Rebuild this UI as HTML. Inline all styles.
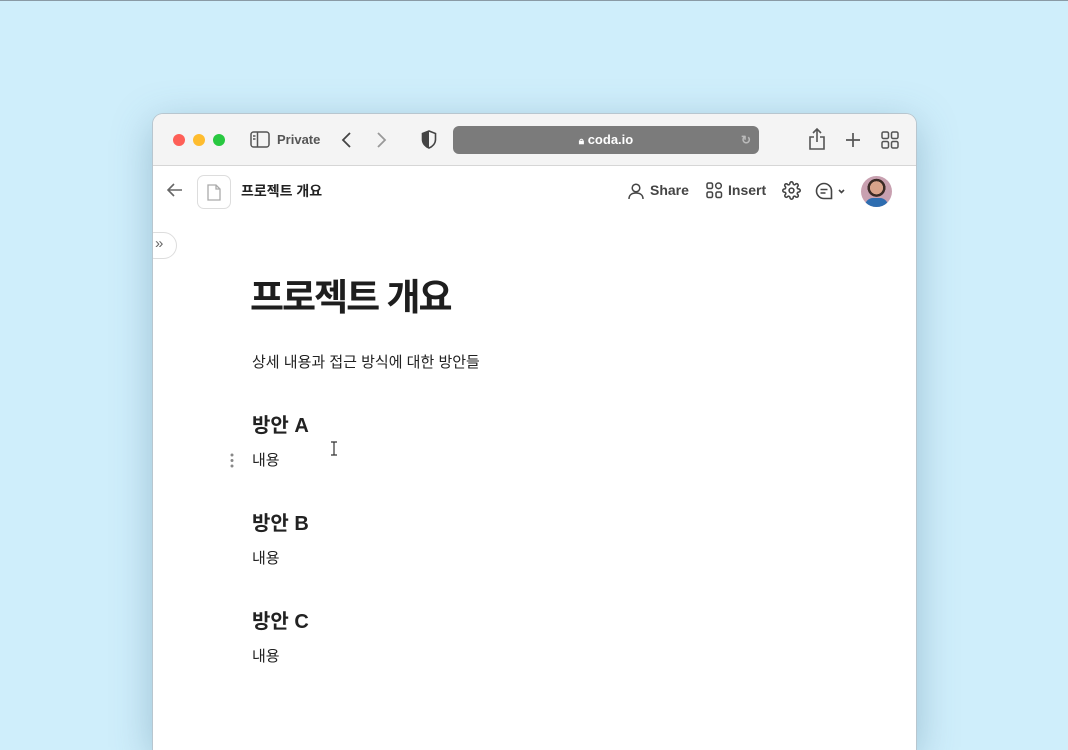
<!DOCTYPE html>
<html><head><meta charset="utf-8"><style>
*{margin:0;padding:0;box-sizing:border-box}
html,body{width:1068px;height:750px;overflow:hidden}
body{background:#cfeefb;position:relative;font-family:"Liberation Sans","Noto Sans CJK KR",sans-serif}
.topline{position:absolute;left:0;top:0;width:1068px;height:1px;background:#8a9aa5}
.win{position:absolute;left:152px;top:113px;width:765px;height:637px;background:#fff;border-radius:11px 11px 0 0;box-shadow:0 10px 40px rgba(60,110,140,.35);overflow:hidden;border:1px solid #b8c6cf;border-bottom:none}
.tb{height:52px;background:#f4f4f4;border-bottom:1px solid #d6d6d6;position:relative}
.dot{position:absolute;top:20px;width:12px;height:12px;border-radius:50%}
.a{position:absolute}
.url{position:absolute;left:300px;top:12px;width:306px;height:28px;background:#7b7b7b;border-radius:6px;color:#fff;font-size:13px;text-align:center;line-height:28px;font-weight:bold}
.t{position:absolute;color:#222;white-space:nowrap}
</style></head><body>
<div class="topline"></div>
<div class="win">
<div class="tb">
<div class="dot" style="left:20px;background:#fe5f57"></div>
<div class="dot" style="left:40px;background:#febc2e"></div>
<div class="dot" style="left:60px;background:#28c840"></div>
<svg class="a" style="left:97px;top:17px" width="20" height="17" viewBox="0 0 20 17" fill="none" stroke="#555" stroke-width="1.5"><rect x="1" y="1" width="18" height="15" rx="2.5"/><line x1="7.5" y1="1" x2="7.5" y2="16"/><line x1="3" y1="5" x2="5.5" y2="5"/><line x1="3" y1="8" x2="5.5" y2="8"/></svg>
<div class="t" style="left:124px;top:18px;font-size:13px;font-weight:bold;color:#555">Private</div>
<svg class="a" style="left:188px;top:17px" width="12" height="18" fill="none" stroke="#444" stroke-width="1.8"><path d="M9 2 2 9l7 7"/></svg>
<svg class="a" style="left:222px;top:17px" width="12" height="18" fill="none" stroke="#999" stroke-width="1.8"><path d="M3 2l7 7-7 7"/></svg>
<svg class="a" style="left:268px;top:16px" width="16" height="19" viewBox="0 0 16 19"><path d="M8 1 1.5 3.5v6c0 4 3 7 6.5 8.5 3.5-1.5 6.5-4.5 6.5-8.5v-6z" fill="none" stroke="#444" stroke-width="1.6"/><path d="M8 1v17c-3.5-1.5-6.5-4.5-6.5-8.5v-6z" fill="#444"/></svg>
<div class="url"><span style="font-size:10px">🔒︎</span> coda.io<span style="position:absolute;right:8px;color:#bbb;font-size:12px">↻</span></div>
<svg class="a" style="left:655px;top:13px" width="18" height="24" fill="none" stroke="#555" stroke-width="1.6"><path d="M9 2v13M5 6l4-4 4 4M6 10H2v12h14V10h-4"/></svg>
<svg class="a" style="left:692px;top:18px" width="16" height="16" stroke="#555" stroke-width="1.7"><path d="M8 1v14M1 8h14"/></svg>
<svg class="a" style="left:728px;top:17px" width="18" height="18" fill="none" stroke="#555" stroke-width="1.5"><rect x="1" y="1" width="6.5" height="6.5" rx="1.5"/><rect x="10.5" y="1" width="6.5" height="6.5" rx="1.5"/><rect x="1" y="10.5" width="6.5" height="6.5" rx="1.5"/><rect x="10.5" y="10.5" width="6.5" height="6.5" rx="1.5"/></svg>
</div>
<svg class="a" style="left:14px;top:69px" width="16" height="14" fill="none" stroke="#666" stroke-width="1.6"><path d="M15 7H2M7 1 1 7l6 6"/></svg>
<div class="a" style="left:44px;top:61px;width:34px;height:34px;border:1px solid #ddd;border-radius:7px"></div>
<svg class="a" style="left:54px;top:70px" width="14" height="17" fill="none" stroke="#aaa" stroke-width="1.3"><path d="M1 1h8l4 4v11H1z M9 1v4h4"/></svg>
<div class="t" style="left:88px;top:67px;font-size:14px;font-weight:bold">프로젝트 개요</div>
<svg class="a" style="left:474px;top:68px" width="18" height="18" fill="none" stroke="#444" stroke-width="1.5"><circle cx="9" cy="6" r="3.8"/><path d="M2 17c0-4 3-6 7-6s7 2 7 6"/></svg>
<div class="t" style="left:497px;top:68px;font-size:14px;font-weight:bold;color:#444">Share</div>
<svg class="a" style="left:553px;top:68px" width="17" height="17" fill="none" stroke="#444" stroke-width="1.5"><rect x="1" y="1" width="5.5" height="5.5" rx="1.5"/><circle cx="12.5" cy="3.8" r="2.8"/><rect x="1" y="10" width="5.5" height="5.5" rx="1.5"/><rect x="10" y="10" width="5.5" height="5.5" rx="1.5"/></svg>
<div class="t" style="left:575px;top:68px;font-size:14px;font-weight:bold;color:#444">Insert</div>
<svg class="a" style="left:629px;top:67px" width="19" height="19" viewBox="0 0 24 24" fill="none" stroke="#444" stroke-width="2"><circle cx="12" cy="12" r="3"/><path d="M19.4 15a1.7 1.7 0 0 0 .3 1.8l.1.1a2 2 0 1 1-2.8 2.8l-.1-.1a1.7 1.7 0 0 0-1.8-.3 1.7 1.7 0 0 0-1 1.5V21a2 2 0 1 1-4 0v-.1a1.7 1.7 0 0 0-1.1-1.5 1.7 1.7 0 0 0-1.8.3l-.1.1a2 2 0 1 1-2.8-2.8l.1-.1a1.7 1.7 0 0 0 .3-1.8 1.7 1.7 0 0 0-1.5-1H3a2 2 0 1 1 0-4h.1a1.7 1.7 0 0 0 1.5-1.1 1.7 1.7 0 0 0-.3-1.8l-.1-.1a2 2 0 1 1 2.8-2.8l.1.1a1.7 1.7 0 0 0 1.800.3H9a1.7 1.7 0 0 0 1-1.5V3a2 2 0 1 1 4 0v.1a1.7 1.7 0 0 0 1 1.5 1.7 1.7 0 0 0 1.8-.3l.1-.1a2 2 0 1 1 2.8 2.8l-.1.1a1.7 1.7 0 0 0-.3 1.8V9a1.7 1.7 0 0 0 1.5 1H21a2 2 0 1 1 0 4h-.1a1.7 1.7 0 0 0-1.5 1z"/></svg>
<svg class="a" style="left:662px;top:68px" width="32" height="18" fill="none" stroke="#444" stroke-width="1.6"><path d="M9 1.5a7.5 7.5 0 1 0 0 15h7.5V9A7.5 7.5 0 0 0 9 1.5zM5.5 7.5h7M5.5 11h5"/><path d="M24 8l2.5 2.5L29 8"/></svg>
<div class="a" style="left:708px;top:62px;width:31px;height:31px;border-radius:50%;background:radial-gradient(circle at 50% 38%,#d9a38b 0 26%,#3a2a25 27% 36%,#c8a0b0 37%);overflow:hidden"><div style="position:absolute;left:4px;top:22px;width:23px;height:12px;background:#2e6db0;border-radius:8px 8px 0 0"></div></div>
<div class="a" style="left:-12px;top:118px;width:36px;height:27px;border:1px solid #ddd;border-radius:14px;background:#fff"></div>
<div class="t" style="left:2px;top:121px;font-size:15px;color:#666">»</div>
<div class="t" style="left:97px;top:153px;font-size:37px;font-weight:bold;letter-spacing:-2px;color:#1e1e1e">프로젝트 개요</div>
<div class="t" style="left:99px;top:237px;font-size:15px;color:#222">상세 내용과 접근 방식에 대한 방안들</div>
<div class="t" style="left:99px;top:295px;font-size:20px;font-weight:bold">방안 A</div>
<div class="t" style="left:99px;top:335px;font-size:15px">내용</div>
<div class="t" style="left:99px;top:393px;font-size:20px;font-weight:bold">방안 B</div>
<div class="t" style="left:99px;top:433px;font-size:15px">내용</div>
<div class="t" style="left:99px;top:491px;font-size:20px;font-weight:bold">방안 C</div>
<div class="t" style="left:99px;top:531px;font-size:15px">내용</div>
<svg class="a" style="left:77px;top:339px" width="4" height="15" fill="#888"><circle cx="2" cy="2" r="1.5"/><circle cx="2" cy="7.5" r="1.5"/><circle cx="2" cy="13" r="1.5"/></svg>
<svg class="a" style="left:177px;top:327px" width="8" height="15" fill="none" stroke="#333" stroke-width="1.2"><path d="M1 1h6M4 1v13M1 14h6"/></svg>
</div>
</body></html>
